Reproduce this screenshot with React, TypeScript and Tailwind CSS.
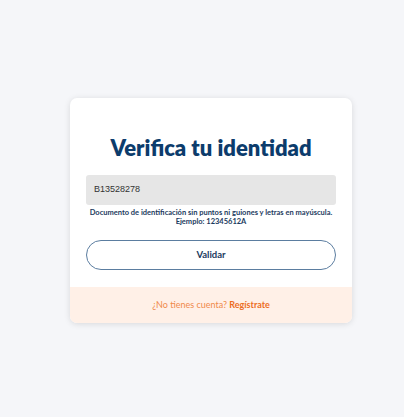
export default function App() {
  return (
    <div className="flex h-[417px] w-full items-start justify-start bg-[#f5f6f9] pl-[70px] pt-[98px] font-['Lato',sans-serif]">
      <div className="w-[282px] overflow-hidden rounded-[7px] bg-white shadow-[0_1px_6px_rgba(0,0,0,0.12)]">
        <div className="px-4 pb-[17px] pt-[36px]">
          <h1 className="text-center text-[22px] font-extrabold leading-[28px] text-[#0c3c6c]">
            Verifica tu identidad
          </h1>
          <div className="mt-[13px] flex h-[30px] items-center rounded-[3px] bg-[#e6e6e6] px-[8px] font-['Liberation_Sans',sans-serif] text-[9px] text-[#333]">
            B13528278
          </div>
          <p className="mt-[3px] text-center text-[7.5px] font-bold leading-[9px] text-[#1c3a5e]">
            Documento de identificación sin puntos ni guiones y letras en mayúscula.
            <br />
            Ejemplo: 12345612A
          </p>
          <button className="mt-[14px] flex h-[30px] w-full items-center justify-center rounded-full border border-[#5b7da0] bg-white text-[9.5px] font-bold text-[#1c3a5e]">
            Validar
          </button>
        </div>
        <div className="flex h-[36px] items-center justify-center bg-[#fff0e7] text-[9px] text-[#f08a4b]">
          ¿No tienes cuenta?&nbsp;<span className="font-bold text-[#ec6d1e]">Regístrate</span>
        </div>
      </div>
    </div>
  );
}
